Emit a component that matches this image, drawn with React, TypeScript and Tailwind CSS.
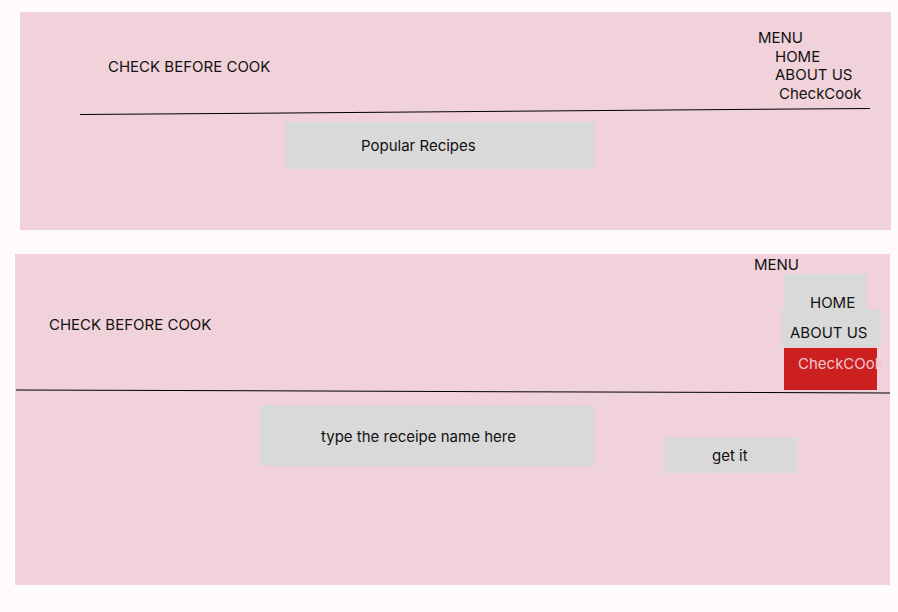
const font = { fontFamily: "Inter, 'Noto Sans', sans-serif" };

function TopPanel() {
  return (
    <section className="ml-[20px] mt-[12px] w-[871px] h-[218px] bg-[#f1d1da] text-[15px] text-[#111]">
      {/* header: title + plain menu */}
      <div className="flex items-start h-[94px]">
        <div className="w-[738px] pl-[88px] pt-[45px] leading-[19px]">CHECK BEFORE COOK</div>
        <nav className="flex flex-col pt-[17px] leading-[18.7px]">
          <span>MENU</span>
          <span className="pl-[17px]">HOME</span>
          <span className="pl-[17px]">ABOUT US</span>
          <span className="pl-[21px]">CheckCook</span>
        </nav>
      </div>
      {/* hand drawn divider */}
      <div className="ml-[60px] mt-[5px] w-[790px] h-px bg-black -rotate-[0.44deg]" />
      <button className="ml-[265px] mt-[10px] w-[310px] h-[47px] bg-[#d9d9d9] text-[15px] leading-[19px] pl-[76px] text-left">
        Popular Recipes
      </button>
    </section>
  );
}

function BottomPanel() {
  return (
    <section className="ml-[15px] mt-[24px] w-[875px] h-[331px] bg-[#f1d1da] text-[15px] text-[#111]">
      <div className="flex items-start">
        <div className="w-[739px] pl-[34px] pt-[61px] leading-[19px]">CHECK BEFORE COOK</div>
        <nav className="flex flex-col leading-[19px]">
          <span className="pt-[1px] h-[20px]">MENU</span>
          <a className="ml-[30px] w-[83px] h-[36px] bg-[#d9d9d9] pl-[26px] pt-[19px]">HOME</a>
          <a className="ml-[27px] -mt-[1px] w-[100px] h-[38px] bg-[#d9d9d9] pl-[9px] pt-[14px] whitespace-nowrap">
            ABOUT US
          </a>
          <a className="ml-[30px] mt-[1px] w-[93px] h-[42px] bg-[#cc2020] pl-[14px] pt-[6px] text-[#f2c6cb] whitespace-nowrap">
            CheckCOok
          </a>
        </nav>
      </div>
      <div className="ml-[1px] mt-[1px] w-[874px] h-px bg-black rotate-[0.2deg]" />
      <div className="flex items-start mt-[13px]">
        <div className="ml-[245px] w-[335px] h-[61px] bg-[#d9d9d9] pl-[61px] pt-[22px] leading-[19px]">
          type the receipe name here
        </div>
        <button className="ml-[68px] mt-[32px] w-[134px] h-[36px] bg-[#d9d9d9] pl-[49px] pt-[9px] text-left leading-[19px] flex">
          get it
        </button>
      </div>
    </section>
  );
}

export default function App() {
  return (
    <div className="w-[898px] h-[612px] bg-[#fffafb] overflow-hidden flow-root" style={font}>
      <TopPanel />
      <BottomPanel />
    </div>
  );
}
